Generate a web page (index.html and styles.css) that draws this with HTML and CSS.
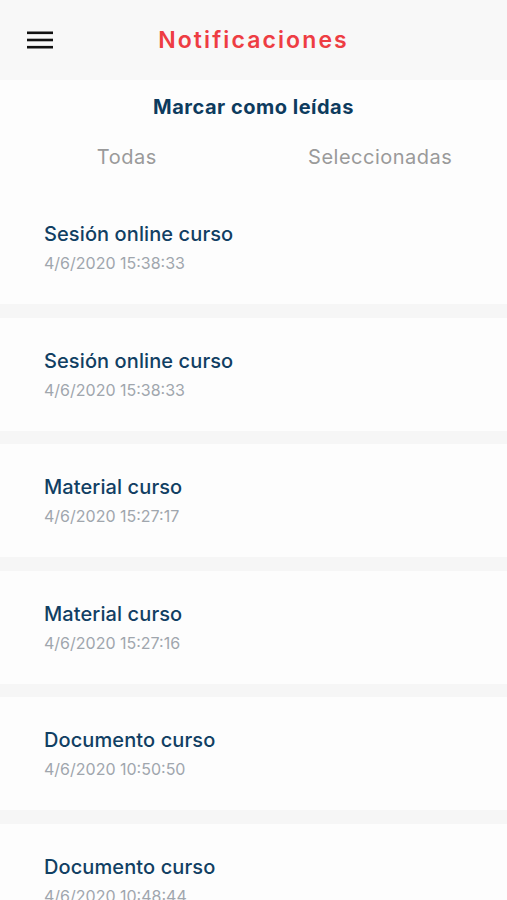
FILE: index.html
```html
<!DOCTYPE html>
<html lang="es">
<head>
<meta charset="utf-8">
<link rel="stylesheet" href="styles.css">
</head>
<body>
<header class="topbar">
  <button class="menu" aria-label="Menú">
    <svg width="27" height="18" viewBox="0 0 27 18"><rect x="0" y="0.5" width="26" height="2.6" fill="#111"/><rect x="0" y="7.7" width="26" height="2.6" fill="#111"/><rect x="0" y="14.9" width="26" height="2.6" fill="#111"/></svg>
  </button>
  <h1 class="title">Notificaciones</h1>
</header>
<div class="actions">
  <div class="mark">Marcar como leídas</div>
  <div class="tabs">
    <div class="tab">Todas</div>
    <div class="tab">Seleccionadas</div>
  </div>
</div>
<ul class="list">
  <li class="item"><div class="name">Sesión online curso</div><div class="date">4/6/2020 15:38:33</div></li>
  <li class="item"><div class="name">Sesión online curso</div><div class="date">4/6/2020 15:38:33</div></li>
  <li class="item"><div class="name">Material curso</div><div class="date">4/6/2020 15:27:17</div></li>
  <li class="item"><div class="name">Material curso</div><div class="date">4/6/2020 15:27:16</div></li>
  <li class="item"><div class="name">Documento curso</div><div class="date">4/6/2020 10:50:50</div></li>
  <li class="item"><div class="name">Documento curso</div><div class="date">4/6/2020 10:48:44</div></li>
</ul>
</body>
</html>
```
FILE: styles.css
```css
* { box-sizing: border-box; }
html, body { margin: 0; padding: 0; }
body {
  width: 507px;
  height: 900px;
  overflow: hidden;
  background: #f6f6f6;
  font-family: Inter, "Noto Sans", sans-serif;
}
.topbar {
  height: 80px;
  background: #f8f8f8;
  display: flex;
  align-items: center;
  position: relative;
}
.menu {
  border: 0;
  background: none;
  padding: 0;
  margin-left: 27px;
  display: flex;
}
.title {
  margin: 0;
  position: absolute;
  left: 0;
  right: 0;
  text-align: center;
  top: 25px;
  font-size: 23px;
  line-height: 30px;
  font-weight: 600;
  letter-spacing: 2.1px;
  color: #ee3d43;
  pointer-events: none;
}
.actions {
  background: #fdfdfd;
  padding-top: 14px;
}
.mark {
  text-align: center;
  font-size: 20px;
  line-height: 26px;
  font-weight: 700;
  letter-spacing: 0.5px;
  color: #0d3b5e;
}
.tabs {
  display: grid;
  grid-template-columns: 1fr 1fr;
  padding-top: 24px;
  height: 71px;
}
.tab {
  text-align: center;
  font-size: 20px;
  line-height: 26px;
  letter-spacing: 0.5px;
  color: #9a9a9a;
}
.list {
  list-style: none;
  margin: 0;
  padding: 0;
  display: flex;
  flex-direction: column;
  gap: 13.5px;
}
.item {
  background: #fdfdfd;
  height: 113px;
  padding: 29px 44px 0;
}
.name {
  font-size: 20px;
  line-height: 28px;
  font-weight: 500;
  letter-spacing: 0.1px;
  color: #113f63;
}
.date {
  font-size: 16px;
  line-height: 22px;
  margin-top: 4px;
  color: #a0a6ad;
}
```
